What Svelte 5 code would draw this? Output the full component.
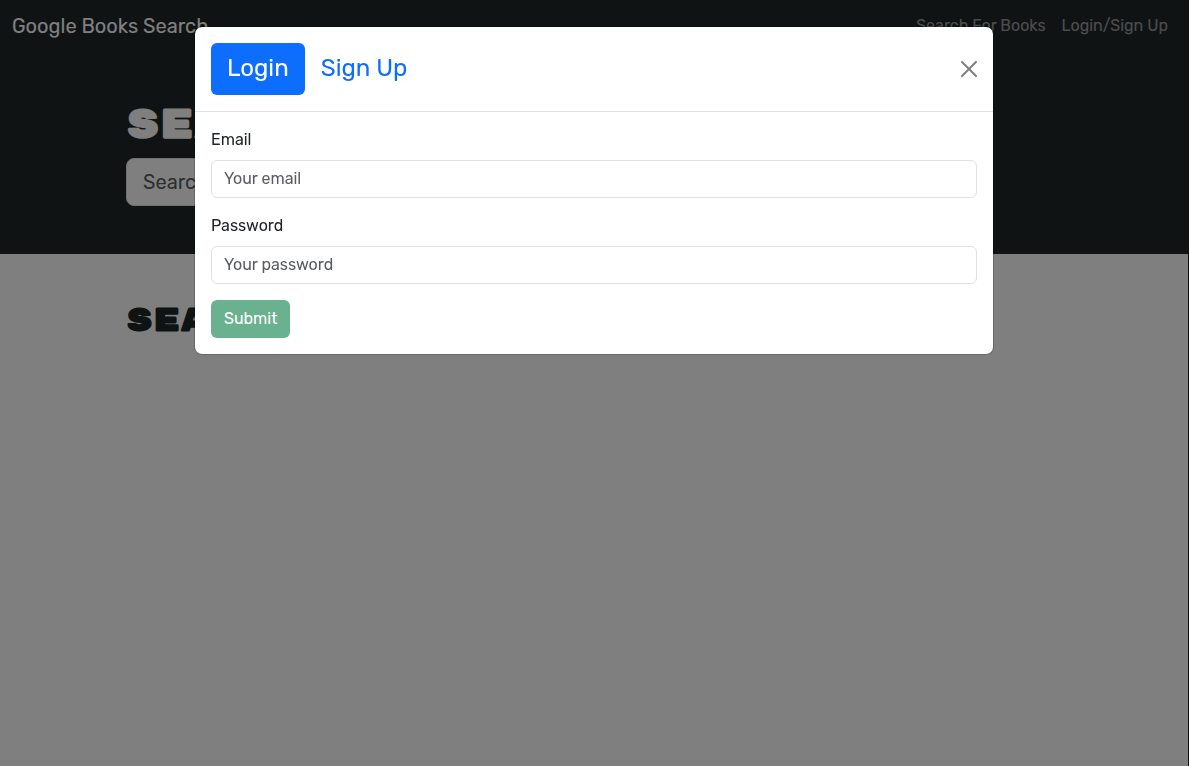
<script>
  let tab = $state('login');
  let open = $state(true);
  let email = $state('');
  let password = $state('');
  let query = $state('');
  const ready = $derived(email !== '' && password !== '');
</script>

<div class="page">
  <nav class="navbar">
    <a class="brand" href="#home">Google Books Search</a>
    <div class="links">
      <a href="#search">Search For Books</a>
      <button type="button" onclick={() => (open = true)}>Login/Sign Up</button>
    </div>
  </nav>

  <header class="hero">
    <div class="container">
      <h1>Search for Books!</h1>
      <form class="search" onsubmit={(e) => e.preventDefault()}>
        <input type="text" aria-label="Search for a book" placeholder="Search for a book" bind:value={query} />
        <div><button class="search-button" type="submit">Submit Search</button></div>
      </form>
    </div>
  </header>

  <main class="container results">
    <h2>Search for a book to begin</h2>
  </main>
</div>

{#if open}
  <div class="backdrop">
    <div class="modal" role="dialog" aria-modal="true" aria-label="Login or sign up">
      <div class="modal-header">
        <div class="tabs" role="tablist">
          <button type="button" role="tab" aria-selected={tab === 'login'} class:active={tab === 'login'} onclick={() => (tab = 'login')}>Login</button>
          <button type="button" role="tab" aria-selected={tab === 'signup'} class:active={tab === 'signup'} onclick={() => (tab = 'signup')}>Sign Up</button>
        </div>
        <button class="close" type="button" aria-label="Close" onclick={() => (open = false)}>
          <svg viewBox="0 0 16 16" width="16" height="16" aria-hidden="true">
            <path d="M.293.293a1 1 0 0 1 1.414 0L8 6.586 14.293.293a1 1 0 1 1 1.414 1.414L9.414 8l6.293 6.293a1 1 0 0 1-1.414 1.414L8 9.414l-6.293 6.293a1 1 0 0 1-1.414-1.414L6.586 8 .293 1.707a1 1 0 0 1 0-1.414z" />
          </svg>
        </button>
      </div>
      <form class="modal-body" onsubmit={(e) => e.preventDefault()}>
        <div class="field">
          <label for="email">Email</label>
          <input id="email" type="email" placeholder="Your email" bind:value={email} />
        </div>
        <div class="field">
          <label for="password">Password</label>
          <input id="password" type="password" placeholder="Your password" bind:value={password} />
        </div>
        <button class="submit" type="submit" disabled={!ready}>Submit</button>
      </form>
    </div>
  </div>
{/if}

<style>
  :global(body) {
    margin: 0;
    background: #fff;
    color: #212529;
    font: 400 16px/24px Rubik, Roboto, sans-serif;
  }
  :global(*) {
    box-sizing: border-box;
  }
  button,
  input {
    font: inherit;
    color: inherit;
    margin: 0;
  }
  button {
    border: 0;
    background: none;
    cursor: pointer;
  }
  a {
    text-decoration: none;
  }
  .page {
    min-height: 100vh;
    border-right: 1px solid #1c2024;
  }
  .navbar {
    display: flex;
    align-items: center;
    justify-content: space-between;
    padding: 6px 12px 8px;
    background: #1f2729;
  }
  .brand {
    color: #fff;
    font-size: 20px;
    line-height: 40px;
  }
  .links {
    display: flex;
  }
  .links a,
  .links button {
    padding: 8px;
    color: rgba(255, 255, 255, 0.55);
  }
  .hero {
    padding: 48px 0;
    background: #1f2729;
    color: #fff;
  }
  .container {
    max-width: 960px;
    margin: 0 auto;
    padding: 0 12px;
  }
  h1,
  h2 {
    margin: 0 0 8px;
    font-family: 'Rubik Mono One', Inter, sans-serif;
    font-weight: 900;
    text-transform: uppercase;
  }
  h1 {
    font-size: 40px;
    line-height: 48px;
  }
  h2 {
    font-size: 32px;
    line-height: 38px;
    color: #1f2729;
  }
  .search {
    display: grid;
    grid-template-columns: 2fr 1fr;
    gap: 24px;
  }
  .search input {
    min-width: 0;
    height: 48px;
    padding: 8px 16px;
    border: 1px solid #dee2e6;
    border-radius: 8px;
    background: #fff;
    color: #212529;
    font-size: 20px;
  }
  .search-button {
    height: 48px;
    padding: 8px 16px;
    border-radius: 8px;
    background: #198754;
    font-size: 20px;
  }
  .results {
    padding-top: 48px;
  }
  .backdrop {
    position: fixed;
    inset: 0;
    overflow: auto;
    padding: 26px 17px 26px 16px;
    background: rgba(0, 0, 0, 0.5);
  }
  .modal {
    max-width: 800px;
    margin: 0 auto;
    border: 1px solid rgba(0, 0, 0, 0.175);
    border-radius: 8px;
    background: #fff;
    background-clip: padding-box;
  }
  .modal-header {
    display: flex;
    align-items: center;
    justify-content: space-between;
    padding: 16px;
    border-bottom: 1px solid #dee2e6;
  }
  .tabs {
    display: flex;
  }
  .tabs button {
    padding: 7px 16px 9px;
    border-radius: 6px;
    color: #0d6efd;
    font-size: 24px;
    line-height: 36px;
  }
  .tabs button.active {
    background: #0d6efd;
    color: #fff;
  }
  .close {
    display: flex;
    margin-right: -8px;
    padding: 8px;
    opacity: 0.5;
  }
  .close svg {
    fill: #000;
  }
  .modal-body {
    padding: 16px;
  }
  .field {
    display: grid;
    gap: 8px;
    margin-bottom: 16px;
  }
  .field input {
    width: 100%;
    height: 38px;
    padding: 5px 12px 7px;
    border: 1px solid #dee2e6;
    border-radius: 6px;
    background: #fff;
  }
  input::placeholder {
    color: rgba(33, 37, 41, 0.75);
    opacity: 1;
  }
  .submit {
    display: block;
    height: 38px;
    padding: 6px 13px;
    border-radius: 6px;
    background: #198754;
    color: #fff;
  }
  .submit:disabled {
    opacity: 0.65;
    cursor: default;
  }
</style>
